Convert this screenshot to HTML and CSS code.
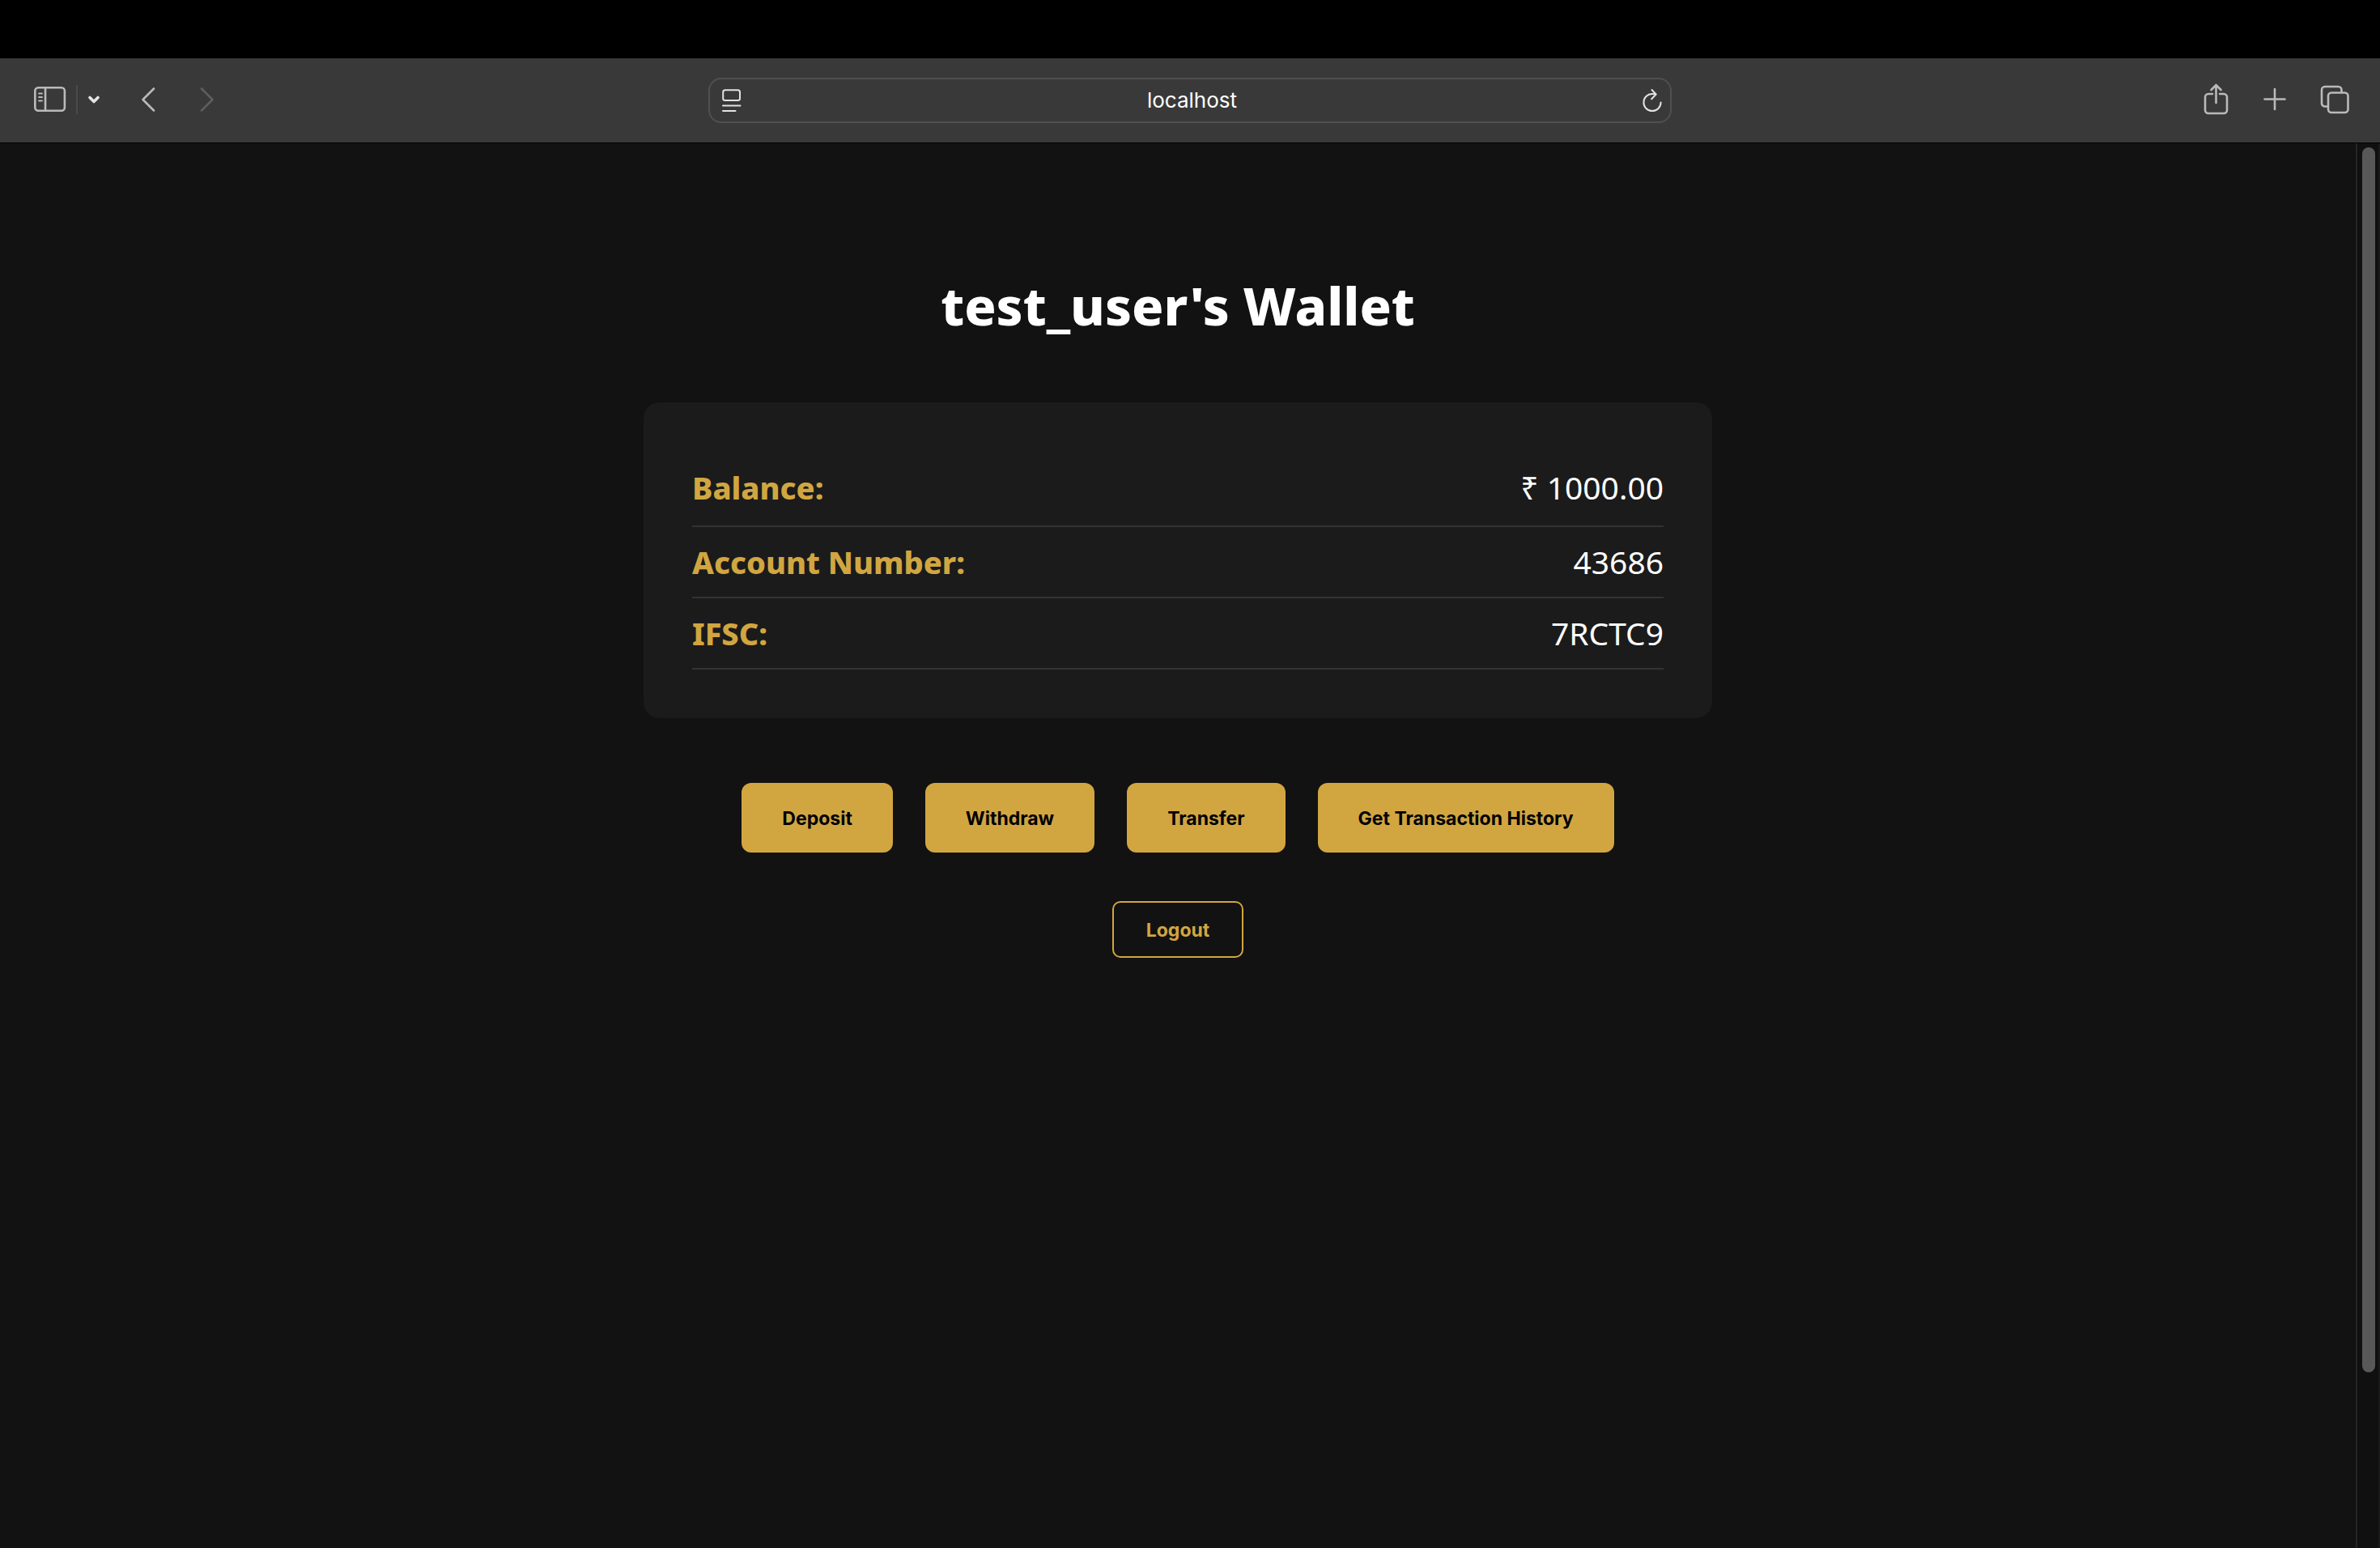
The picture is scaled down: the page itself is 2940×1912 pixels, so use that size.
FILE: index.html
```html
<!DOCTYPE html>
<html lang="en">
<head>
<meta charset="utf-8">
<meta name="viewport" content="width=device-width, initial-scale=1">
<title>Wallet</title>
<link rel="stylesheet" href="styles.css">
</head>
<body>
<div class="menu-bar"></div>
<header class="toolbar">
  <div class="tools tools-left">
    <button class="tool" type="button" aria-label="Sidebar">
      <svg width="42" height="36" viewBox="-2 0 42 36"><rect x="1.3" y="3.3" width="36.6" height="28.4" rx="4"/><path d="M14 3.5v28"/><path class="thin" d="M6 10.5h4M6 15h4M6 19.500h4"/></svg>
    </button>
    <span class="divider"></span>
    <button class="tool tool-menu" type="button" aria-label="Tab groups">
      <svg width="16" height="36" viewBox="0 0 16 36"><path d="M3 15.500l5 5 5-5"/></svg>
    </button>
    <button class="tool tool-nav" type="button" aria-label="Back">
      <svg width="20" height="36" viewBox="0 0 20 36"><path d="M17 4.500L3.500 18 17 31.500"/></svg>
    </button>
    <button class="tool tool-nav tool-forward" type="button" aria-label="Forward" disabled>
      <svg width="24" height="36" viewBox="-4 0 24 36"><path d="M3 4.500L16.500 18 3 31.500"/></svg>
    </button>
  </div>
  <div class="address">
    <button class="tool small" type="button" aria-label="Reader">
      <svg width="24" height="30" viewBox="0 0 24 30"><rect x="1.200" y="2.200" width="20.800" height="12.800" rx="2.500"/><path d="M1 21.500h21.500M1 28h15.500"/></svg>
    </button>
    <input class="url" type="text" value="localhost" aria-label="Address">
    <button class="tool small" type="button" aria-label="Reload">
      <svg width="24" height="30" viewBox="0 0 24 30"><path d="M22.600 17.500a10.600 10.600 0 1 1-10.600-10.600q2 0 4.500.6M11.500 2l5.200 5.500-5.500 5.700"/></svg>
    </button>
  </div>
  <div class="tools tools-right">
    <button class="tool" type="button" aria-label="Share">
      <svg width="32" height="40" viewBox="0 0 32 40"><path d="M11 14H6a4 4 0 0 0-4 4v16a4 4 0 0 0 4 4h19a4 4 0 0 0 4-4V18a4 4 0 0 0-4-4h-5M15.500 25V3M9.500 9l6-6 6 6"/></svg>
    </button>
    <button class="tool" type="button" aria-label="New tab">
      <svg width="28" height="40" viewBox="0 0 28 40"><path d="M14 8v25M1.500 20.500h25"/></svg>
    </button>
    <button class="tool" type="button" aria-label="Tab overview">
      <svg width="36" height="40" viewBox="0 0 36 40"><path d="M9.500 29.500H6a4 4 0 0 1-4-4V9a4 4 0 0 1 4-4h16.500a4 4 0 0 1 4 4v3"/><rect x="10" y="12.500" width="24.500" height="24.500" rx="4"/></svg>
    </button>
  </div>
</header>
<div class="viewport">
  <main class="wallet">
    <h1 class="title">test_user's Wallet</h1>
    <section class="card">
      <table class="details">
        <tr class="balance"><th scope="row">Balance:</th><td>₹ 1000.00</td></tr>
        <tr><th scope="row">Account Number:</th><td>43686</td></tr>
        <tr><th scope="row">IFSC:</th><td>7RCTC9</td></tr>
      </table>
    </section>
    <div class="actions">
      <button class="action" type="button">Deposit</button>
      <button class="action" type="button">Withdraw</button>
      <button class="action" type="button">Transfer</button>
      <button class="action" type="button">Get Transaction History</button>
    </div>
    <button class="logout" type="button">Logout</button>
  </main>
  <div class="scroll-track"><div class="scroll-thumb"></div></div>
</div>
</body>
</html>
```
FILE: styles.css
```css
* { box-sizing: border-box; }

body {
  margin: 0;
  min-height: 100vh;
  display: flex;
  flex-direction: column;
  background: #121212;
  color: #fff;
  font-family: Tahoma, "Noto Sans", "DejaVu Sans", sans-serif;
}

button, input { font-family: Inter, "Liberation Sans", sans-serif; }

.menu-bar { height: 72px; background: #000; }

/* Browser toolbar */
.toolbar {
  display: grid;
  grid-template-columns: 1fr minmax(0, 1190px) 1fr;
  align-items: center;
  height: 105px;
  padding: 0 40px;
  background: #393939;
  border-bottom: 1px solid #000;
}

.tools { display: flex; align-items: center; padding-bottom: 2px; }
.tools-right { justify-content: flex-end; gap: 42px; padding-bottom: 4px; margin-right: -2px; }

.tool {
  display: block;
  padding: 0;
  border: 0;
  background: none;
  color: #bababa;
}

.tool svg {
  display: block;
  fill: none;
  stroke: currentColor;
  stroke-width: 2.6;
  stroke-linecap: round;
  stroke-linejoin: round;
}

.tool .thin { stroke-width: 1.8; }
.divider { width: 2px; height: 36px; margin: 0 12px; background: #4b4b4b; }
.tool-menu { color: #e4e4e4; }
.tool-menu svg { stroke-width: 3.6; }
.tool-nav { margin-left: 49px; }
.tool-forward { color: #5e5e5e; }

.address {
  display: flex;
  align-items: center;
  height: 56px;
  padding: 0 10px 0 15px;
  border: 2px solid #505050;
  border-radius: 16px;
}

.small { color: #e2e2e2; }
.small svg { stroke-width: 2; }

.url {
  flex: 1;
  min-width: 0;
  padding: 0;
  border: 0;
  outline: 0;
  background: none;
  color: #fff;
  font-size: 26px;
  line-height: 32px;
  text-align: center;
}

/* Page */
.viewport { flex: 1; display: flex; }

.wallet {
  flex: 1;
  display: flex;
  flex-direction: column;
  align-items: center;
  padding: 160px 40px 60px;
}

.title {
  margin: 0 0 80px;
  font-size: 65px;
  font-weight: 800;
  line-height: 80px;
}

.card {
  width: 100%;
  max-width: 1320px;
  padding: 60px;
  border-radius: 20px;
  background: #1b1b1b;
}

.details {
  width: 100%;
  border-spacing: 0;
  font-size: 39px;
  line-height: 48px;
}

.details th, .details td {
  height: 88px;
  padding: 0;
  border-bottom: 2px solid #333;
  font-weight: 400;
  text-align: right;
}

.details th { color: #d1a641; font-size: 38px; font-weight: 800; text-align: left; }
.details .balance th, .details .balance td { height: 94px; padding-bottom: 2px; }

.actions {
  display: flex;
  flex-wrap: wrap;
  justify-content: center;
  gap: 40px;
  margin: 80px 0 60px;
}

.action, .logout {
  font-size: 23px;
  font-weight: 700;
  line-height: 26px;
}

.action {
  padding: 31px 50px 29px;
  border: 0;
  border-radius: 12px;
  background: #d1a641;
  color: #000;
}

.logout {
  padding: 21px 40px 19px;
  border: 2px solid #d1a641;
  border-radius: 10px;
  background: none;
  color: #d1a641;
}

.scroll-track {
  width: 30px;
  padding: 5px 6px;
  border-left: 2px solid #252525;
  border-right: 2px solid #1a1a1a;
  background: #101010;
}

.scroll-thumb { width: 16px; height: calc(100% - 212px); border-radius: 8px; background: #585858; }
```
